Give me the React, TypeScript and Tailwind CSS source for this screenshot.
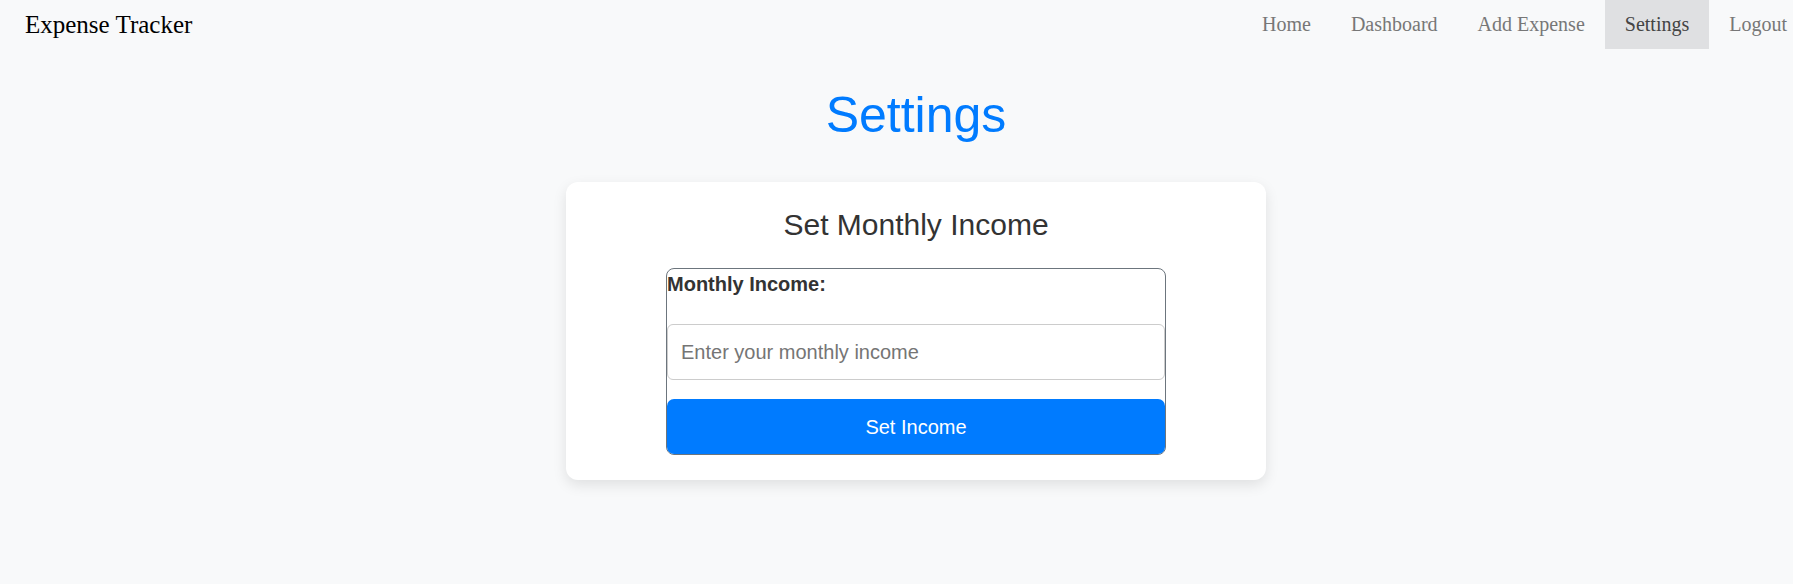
import React from 'react';

const navLinks = ['Home', 'Dashboard', 'Add Expense', 'Settings', 'Logout'];

const Navbar = () => (
    <nav className="flex items-center justify-between h-[49px] pl-[25px] pr-[25px] font-['Liberation_Serif',serif]">
        <div className="text-[25px] leading-[29px] text-black">Expense Tracker</div>
        <ul className="flex h-full">
            {navLinks.map(link => (
                <li
                    key={link}
                    className={`flex items-center px-5 text-[20px] leading-[23px] ${link === 'Settings' ? 'bg-[#dfe0e2] text-[#444]' : 'text-[#777]'}`}
                >
                    {link}
                </li>
            ))}
        </ul>
    </nav>
);

const IncomeCard = () => (
    <div className="w-[700px] bg-white rounded-[12px] shadow-[0_5px_14px_rgba(0,0,0,0.1)] px-[25px] pt-[25px] pb-[25px] flex flex-col items-center">
        <h2 className="text-[30px] leading-[34.5px] text-[#333] mt-[1px] mb-[25.5px]">Set Monthly Income</h2>

        {/* form box with its own border */}
        <form
            className="w-[500px] border border-[#6c757d] rounded-[8px] flex flex-col"
            onSubmit={e => e.preventDefault()}
        >
            <label className="block text-[20px] leading-[23px] font-bold text-[#333] mt-[3.5px] mb-[28.5px]">Monthly Income:</label>
            <input
                type="number"
                placeholder="Enter your monthly income"
                className="w-full h-[56px] px-[13px] text-[20px] border border-[#ccc] rounded-[6px] bg-white placeholder:text-[#757575] outline-none mb-[19px]"
            />
            <button
                type="submit"
                className="w-full h-[55px] bg-[#007bff] text-white text-[20px] rounded-[7px]"
            >
                Set Income
            </button>
        </form>
    </div>
);

export default function App() {
    return (
        <div className="w-full min-h-screen overflow-hidden bg-[#f8f9fa]">
            <div className="w-[1832px] font-['Liberation_Sans',Arial,sans-serif]">
                <Navbar />
                <main className="flex flex-col items-center pt-[38px]">
                    <h1 className="text-[50px] leading-[57.5px] text-[#007bff] mb-[37.5px]">Settings</h1>
                    <IncomeCard />
                </main>
            </div>
        </div>
    );
}
